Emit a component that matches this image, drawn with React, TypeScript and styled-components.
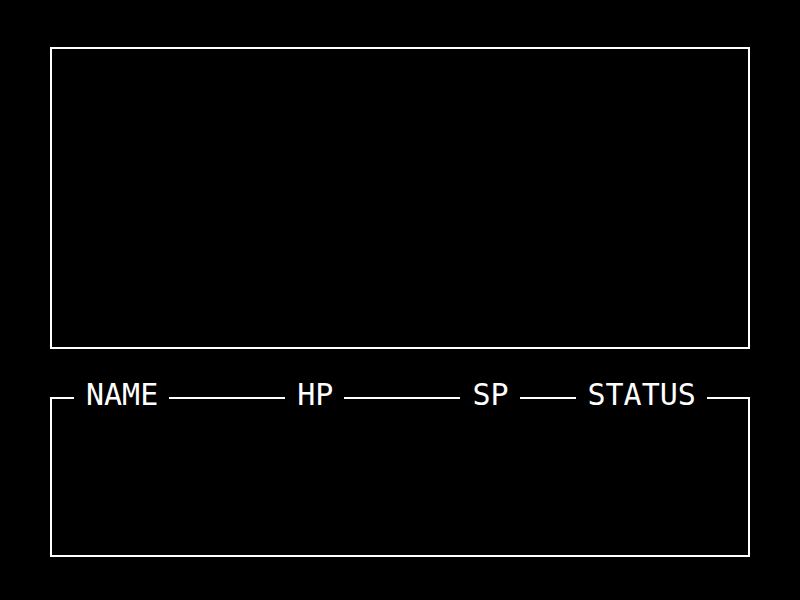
import React from "react";
import styled, { createGlobalStyle } from "styled-components";

const GlobalStyle = createGlobalStyle`
  html, body {
    margin: 0;
    padding: 0;
    background: #000;
  }
  body {
    font-family: "DejaVu Sans Mono", "Liberation Mono", monospace;
    color: #fff;
  }
`;

const Screen = styled.div`
  width: 800px;
  height: 600px;
  box-sizing: border-box;
  padding: 47px 50px 0 50px;
  display: flex;
  flex-direction: column;
  gap: 48px;
  background: #000;
`;

const ViewPanel = styled.div`
  width: 700px;
  height: 302px;
  box-sizing: border-box;
  border: 2px solid #fff;
`;

const PartyPanel = styled.div`
  width: 700px;
  height: 160px;
  box-sizing: border-box;
  border: 2px solid #fff;
  border-top: none;
  display: flex;
  flex-direction: column;
`;

const Header = styled.div`
  display: flex;
  align-items: flex-start;
  height: 30px;
  margin-top: -17px;
`;

const Rule = styled.div<{ $w?: number }>`
  height: 2px;
  margin-top: 17px;
  background: #fff;
  ${(p) => (p.$w ? `width: ${p.$w}px; flex: none;` : `flex: 1;`)}
`;

const Label = styled.span`
  font-family: "DejaVu Sans Mono", "Liberation Mono", monospace;
  font-size: 30px;
  line-height: 30px;
  color: #fff;
  padding: 0 11px 0 12px;
  white-space: nowrap;
`;

export default function App() {
  return (
    <>
      <GlobalStyle />
      <Screen>
        <ViewPanel />
        <PartyPanel>
          <Header>
            <Rule $w={22} />
            <Label>NAME</Label>
            <Rule $w={116} />
            <Label>HP</Label>
            <Rule $w={116} />
            <Label>SP</Label>
            <Rule $w={56} />
            <Label>STATUS</Label>
            <Rule />
          </Header>
        </PartyPanel>
      </Screen>
    </>
  );
}
